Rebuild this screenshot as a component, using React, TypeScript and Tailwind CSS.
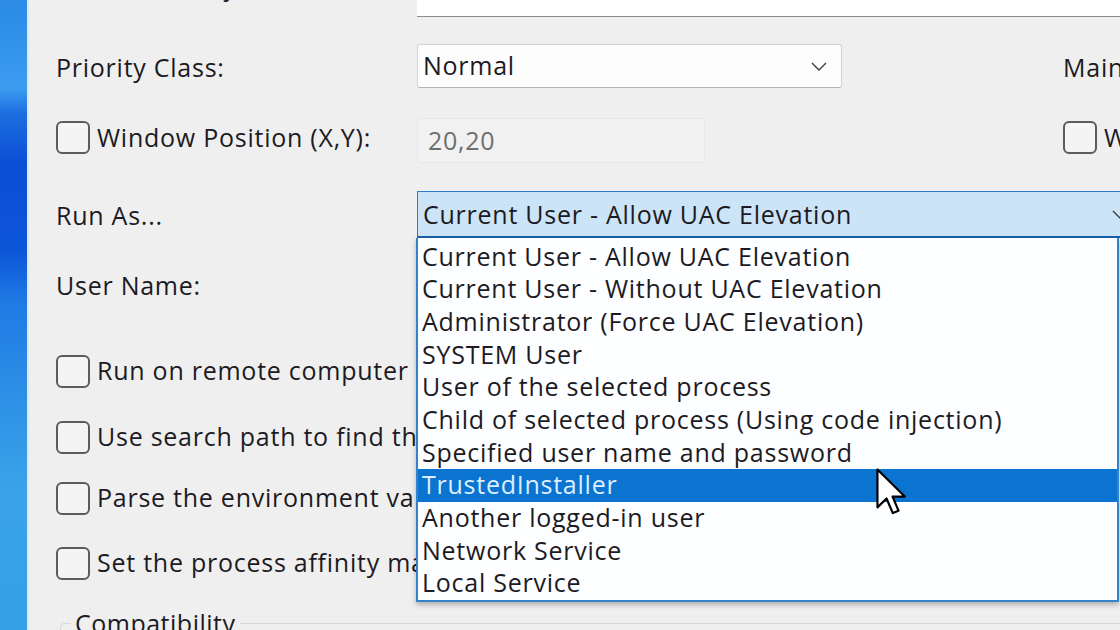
import React from "react";

const font = { fontFamily: '"Segoe UI", "Open Sans", "Noto Sans", sans-serif' };

const runAsOptions = [
  "Current User - Allow UAC Elevation",
  "Current User - Without UAC Elevation",
  "Administrator (Force UAC Elevation)",
  "SYSTEM User",
  "User of the selected process",
  "Child of selected process (Using code injection)",
  "Specified user name and password",
  "TrustedInstaller",
  "Another logged-in user",
  "Network Service",
  "Local Service",
];

function Chevron({ className = "" }: { className?: string }) {
  return (
    <svg width="16" height="9" viewBox="0 0 16 9" className={className}>
      <path d="M1 1l7 7 7-7" fill="none" stroke="#3a3a3a" strokeWidth="1.4" />
    </svg>
  );
}

function Checkbox() {
  return <span className="h-[33px] w-[34px] shrink-0 rounded-[6px] border-2 border-[#5c5c5c] bg-[#f4f4f4]" />;
}

function Cursor() {
  return (
    <svg width="30" height="48" viewBox="0 0 12.5 20" className="absolute left-[847px] top-[468px] z-20">
      <path
        d="M0.6 0.6 L0.6 16.4 L4.4 12.7 L7 18.8 L9.4 17.8 L6.9 11.9 L12 11.9 Z"
        fill="#fff"
        stroke="#000"
        strokeWidth="0.9"
        strokeLinejoin="round"
      />
    </svg>
  );
}

function CheckRow({ label, className }: { label: string; className: string }) {
  return (
    <div className={`flex h-[34px] items-center gap-[7px] whitespace-nowrap ${className}`}>
      <Checkbox />
      <span>{label}</span>
    </div>
  );
}

export default function App() {
  return (
    <div className="flex h-[630px] w-[1120px] overflow-hidden text-[25px] tracking-[0.75px] text-[#1c1a22]" style={font}>
      <div className="w-[27px] shrink-0 bg-[linear-gradient(180deg,#2a8ae6_0%,#3b9cf0_14%,#1d6fe0_18%,#0b4ed6_26%,#0d56d8_40%,#1f7ae4_48%,#2c8fe6_62%,#3aa3e8_78%,#35a0e6_100%)]" />
      <div className="w-[2px] shrink-0 bg-[#dfe7ef]" />
      <div className="relative flex flex-1 flex-col bg-[#efefef] pl-[27px]">
        {/* Start directory */}
        <div className="mt-[-27px] grid h-[44px] grid-cols-[361px_1fr] items-start">
          <span className="whitespace-nowrap pt-[1px] leading-none">Start Directory:</span>
          <div className="h-[44px] border-b border-[#8c8c8c] bg-white" />
        </div>

        {/* Priority */}
        <div className="mt-[27px] grid h-[44px] grid-cols-[361px_646px_1fr] items-center">
          <span className="pt-[3px]">Priority Class:</span>
          <div className="flex h-[44px] w-[425px] items-center justify-between rounded-[3px] border border-[#d3d3d3] border-b-[#b4b4b4] bg-[#fdfdfd] pl-[5px] pr-[14px]">
            <span>Normal</span>
            <Chevron />
          </div>
          <span className="whitespace-nowrap pt-[3px]">Main Window State:</span>
        </div>

        {/* Window position */}
        <div className="mt-[30px] grid h-[45px] grid-cols-[361px_646px_1fr] items-center">
          <div className="mb-[6px] flex items-center gap-[7px] whitespace-nowrap">
            <Checkbox />
            <span>Window Position (X,Y):</span>
          </div>
          <div className="flex h-[45px] w-[288px] items-center rounded-[3px] border border-[#e6e6e6] bg-[#f1f1f1] pl-[10px] text-[#6e6e6e]">
            20,20
          </div>
          <div className="mb-[6px] flex items-center gap-[7px] whitespace-nowrap">
            <Checkbox />
            <span>Window Size</span>
          </div>
        </div>

        {/* Run as */}
        <div className="mt-[28px] grid h-[47px] grid-cols-[361px_1fr] items-center">
          <span className="pt-[3px]">Run As...</span>
          <div className="flex h-[47px] w-[720px] items-center justify-between border border-b-2 border-[#2f7cc4] border-b-[#1a5ea8] bg-[#cce4f7] pl-[5px] pr-[8px]">
            <span className="pt-[1px]">Current User - Allow UAC Elevation</span>
            <Chevron />
          </div>
        </div>

        {/* User name */}
        <div className="mt-[25px] grid h-[46px] grid-cols-[361px_1fr] items-center">
          <span className="pt-[2px]">User Name:</span>
          <div className="h-[44px] w-[500px] rounded-[3px] border border-[#d3d3d3] bg-white" />
        </div>

        <CheckRow className="mt-[47px]" label="Run on remote computer with PAExec" />
        <CheckRow className="mt-[32px]" label="Use search path to find the program location" />
        <CheckRow className="mt-[27px]" label="Parse the environment variables in the command-line" />
        <CheckRow className="mt-[31px]" label="Set the process affinity mask" />

        <fieldset className="ml-[4px] mt-[25px] h-[60px] rounded-[4px] border border-[#d6d6d6] pl-[10px]">
          <legend className="px-[4px] tracking-[0.5px]">Compatibility</legend>
        </fieldset>

        {/* open dropdown list */}
        <ul className="absolute left-[387px] top-[238px] z-10 w-[703px] border-x-2 border-b-2 border-[#3582cb] bg-[#fdfeff] pt-[2px] shadow-[0_3px_5px_rgba(0,0,0,0.25)]">
          {runAsOptions.map((o) => (
            <li
              key={o}
              className={`flex h-[32.7px] items-center whitespace-nowrap pl-[4px] ${
                o === "TrustedInstaller" ? "bg-[#0a74d0] text-[#dceeff]" : ""
              }`}
            >
              {o}
            </li>
          ))}
        </ul>
        <Cursor />
      </div>
    </div>
  );
}
